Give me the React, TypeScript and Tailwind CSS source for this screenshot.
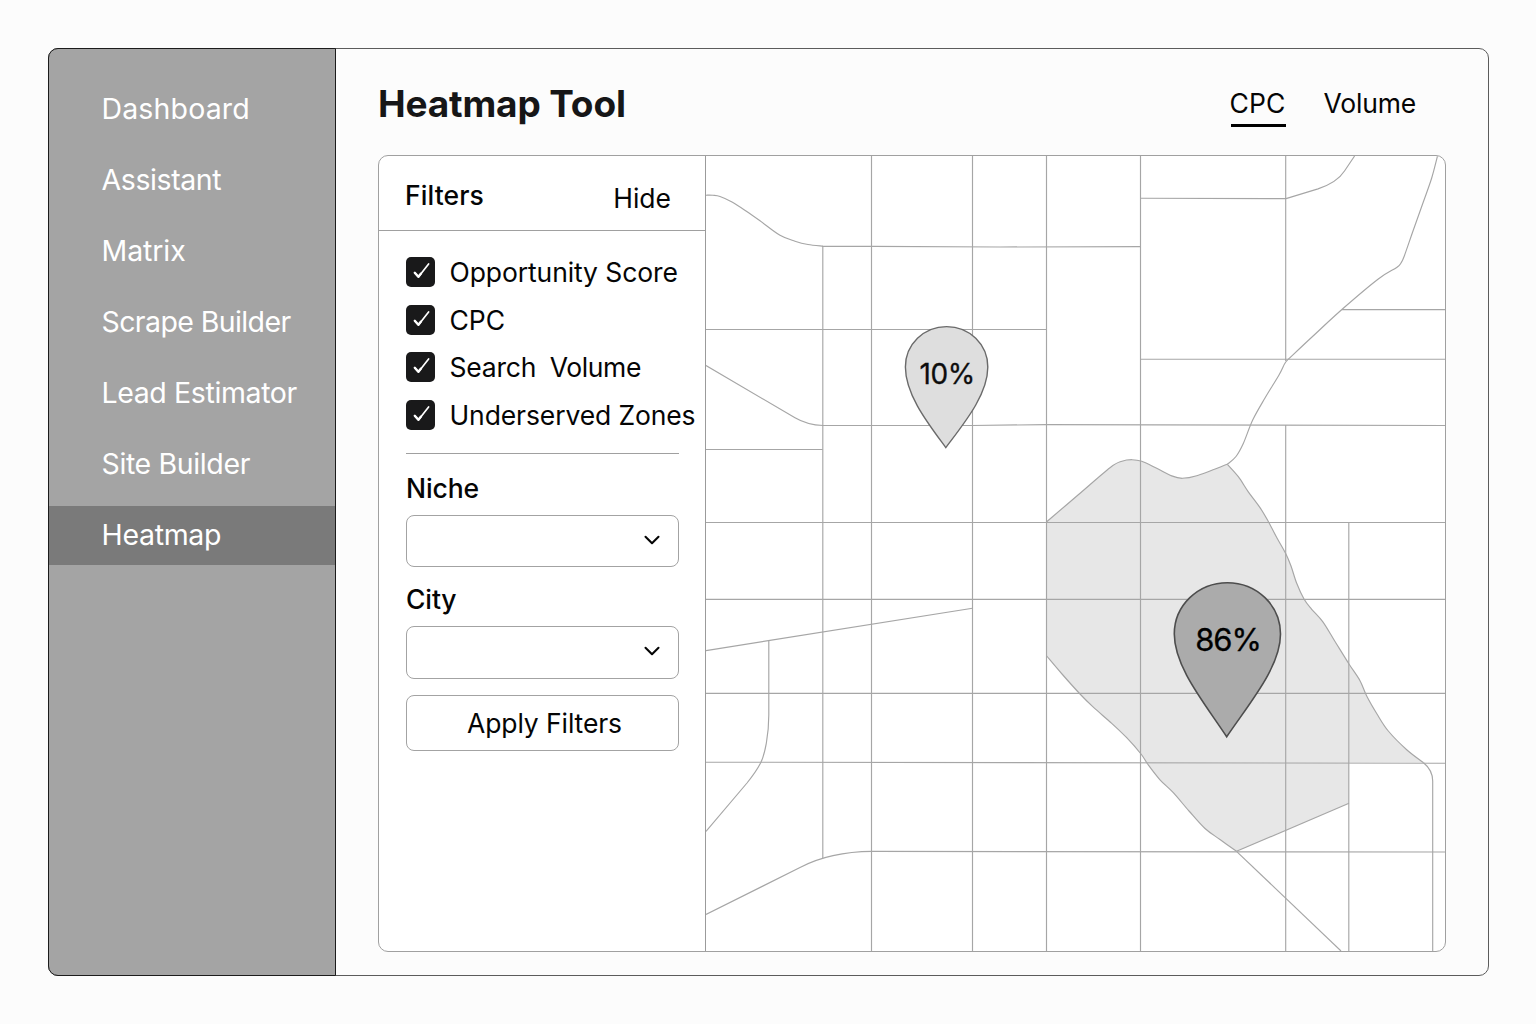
import type { ReactNode } from "react";
import { ChevronDown } from "lucide-react";

type Point = [number, number];

/** Smooth open curve through the given points (Catmull-Rom converted to Béziers). */
function curve(points: Point[], move = true): string {
  let d = move ? `M${points[0][0]} ${points[0][1]}` : "";
  for (let i = 0; i < points.length - 1; i++) {
    const p0 = points[Math.max(i - 1, 0)];
    const p1 = points[i];
    const p2 = points[i + 1];
    const p3 = points[Math.min(i + 2, points.length - 1)];
    const c1 = [p1[0] + (p2[0] - p0[0]) / 6, p1[1] + (p2[1] - p0[1]) / 6];
    const c2 = [p2[0] - (p3[0] - p1[0]) / 6, p2[1] - (p3[1] - p1[1]) / 6];
    d += ` C${c1[0]} ${c1[1]} ${c2[0]} ${c2[1]} ${p2[0]} ${p2[1]}`;
  }
  return d;
}

const navItems = [
  { label: "Dashboard", tracking: "tracking-[0.15px]" },
  { label: "Assistant", tracking: "tracking-[-0.4px]" },
  { label: "Matrix", tracking: "tracking-[-0.1px]" },
  { label: "Scrape Builder", tracking: "tracking-[-0.6px]" },
  { label: "Lead Estimator", tracking: "tracking-[-0.38px]" },
  { label: "Site Builder", tracking: "tracking-[-0.37px]" },
  { label: "Heatmap", tracking: "tracking-[-0.3px]", active: true },
];

const zoneTop: Point[] = [
  [1046.7, 521.7], [1078, 495], [1110, 467.7], [1122, 461.2], [1132, 459.7], [1141.7, 461.3],
  [1156.7, 468.3], [1171.7, 475.9], [1182.3, 478.3], [1196.7, 475.8], [1227.3, 464.3],
];
const zoneRight: Point[] = [
  [1227.3, 464.3], [1238.3, 476.7], [1248.3, 491.8], [1260, 507.6], [1268.3, 521.5], [1277, 538],
  [1285.7, 553.5], [1291, 566], [1296.7, 583.3], [1304, 599], [1311.7, 609.3], [1322.7, 621.7],
  [1334.7, 641], [1349, 664], [1360, 680.7], [1366.7, 696], [1377, 714], [1388.3, 731],
  [1406.7, 749.7], [1423.3, 762.5],
];
const zoneLeft: Point[] = [
  [1046.7, 656], [1062, 674], [1080, 694], [1093.3, 707.2], [1111.7, 723.3], [1126.7, 737.7],
  [1141, 754], [1148, 764.5], [1160, 779.8], [1173.3, 792.7], [1189, 811], [1205, 828.5],
  [1220, 839.5], [1236.5, 851.3],
];
const zoneFill = `${curve(zoneTop)} ${curve(zoneRight, false)} L1349 762.5 V803.3 L1236.5 851.3 ${curve(
  [...zoneLeft].reverse(),
  false,
)} Z`;

const streets = [
  // north-south
  "M871.5 156V951",
  "M972.5 156V951",
  "M1046.5 156V951",
  "M1140.5 156V951",
  "M1285.7 156V361",
  "M1285.7 425V951",
  "M1348.8 522V951",
  "M822.8 246V858",
  // east-west
  "M1140.5 198.2L1286 198.6",
  "M822 246.3H872L1000 247L1140.5 246.6",
  "M1342 309.6H1445",
  "M706 329.5H1046.5",
  "M1140.5 359.2H1445",
  "M822 425.5H972L1046 424.6L1445 425.5",
  "M706 449.5H822.8",
  "M706 522.5H1445",
  "M706 599.4H1445",
  "M706 693.4H1445",
  "M706 762.2L1445 763.2",
  "M872 851.4L1445 852",
  // diagonals and bends
  "M706 650.6L972.5 608.2",
  "M768.8 641V715C768.8 735 765 754 760.6 763C757 770 751 778 747 783L706 831.5",
  "M706 914.5L800 867.5C820 857 846 851.6 872 851.4",
  "M706 365.6L795 417.8C803 422.5 812 425.2 823 425.5",
  "M1286 198.6L1318 188.9C1331 184.5 1340 178 1344.5 171L1354.6 156",
  "M1236.5 851.3L1341 951",
  "M1349 803.3L1236.5 851.3",
  "M1423.3 762.5C1430 768 1432.7 773 1432.7 781V951",
];

const bends: Point[][] = [
  [[706, 195.2], [713, 195.3], [720, 196.5], [732, 202], [746, 211], [760, 220.8], [780, 235.3], [795, 241.2], [808, 244.5], [823, 246.2]],
  [[1437.5, 156], [1431.7, 178], [1423.3, 202], [1413, 231], [1404.3, 256], [1401, 263], [1396.7, 267.5], [1378.3, 279], [1343.3, 308.3], [1312, 337], [1288, 359.5]],
  [[1288, 359.5], [1284.5, 364], [1279, 375], [1265, 398], [1252.7, 420], [1243.3, 443.5], [1236, 456.5], [1227.3, 464.3]],
];

function MapView() {
  return (
    <svg
      className="block h-full w-full font-['Inter',sans-serif]"
      viewBox="706 156 739 795"
      preserveAspectRatio="none"
      role="img"
      aria-label="City heatmap"
    >
      <path d={zoneFill} fill="#e7e7e7" />
      <g fill="none" stroke="#a6a6a6" strokeWidth="1.15">
        {streets.map((d) => (
          <path key={d} d={d} />
        ))}
        {bends.map((points, i) => (
          <path key={i} d={curve(points)} />
        ))}
        <path d={curve(zoneTop)} />
        <path d={curve(zoneRight)} />
        <path d={curve(zoneLeft)} />
      </g>

      <path
        d="M945.8 447.6C928.5 424 905.4 395 905.4 367C905.4 344.4 923.8 326.6 946.6 326.6C969.4 326.6 987.8 344.4 987.8 367C987.8 395 963.5 424 945.8 447.6Z"
        fill="#dedede"
        stroke="#6a6a6a"
        strokeWidth="1.4"
      />
      <text x="919.4" y="384" fontSize="28" letterSpacing="-0.4" fill="#0d0d0d" stroke="#0d0d0d" strokeWidth="0.3">
        10%
      </text>

      <path
        d="M1226.7 736.8C1204.5 703 1174.3 667 1174.3 634C1174.3 605.6 1198 582.7 1227.4 582.7C1256.8 582.7 1280.5 605.6 1280.5 634C1280.5 667 1249.5 703 1226.7 736.8Z"
        fill="#ababab"
        stroke="#4d4d4d"
        strokeWidth="1.6"
      />
      <text x="1195.2" y="650.9" fontSize="31" letterSpacing="-1.1" fill="#000" stroke="#000" strokeWidth="0.3">
        86%
      </text>
    </svg>
  );
}

function CheckRow({ children }: { children: ReactNode }) {
  return (
    <label className="flex h-[30px] items-center gap-[14.5px] whitespace-nowrap">
      <span className="h-[30px] w-[29px] shrink-0 rounded-[5px] bg-[#19191a]">
        <svg className="block" width="29" height="30" viewBox="0 0 29 30" fill="none" stroke="#fff" strokeLinecap="round" strokeLinejoin="round">
          <path d="M8.6 15.8L12.4 20L22.6 7" strokeWidth="1.7" />
          <path d="M8.8 15.8L12.4 19.8L15 16.6" strokeWidth="2.3" />
        </svg>
      </span>
      <span className="pt-[2px]">{children}</span>
    </label>
  );
}

function SelectField({ label }: { label: string }) {
  return (
    <div>
      <div className="h-8 font-medium leading-8 tracking-[-0.1px]">{label}</div>
      <button
        aria-label={label}
        className="mt-[10.9px] flex h-[52.5px] w-full items-center justify-end rounded-lg border border-[#a3a3a3] pr-[13px]"
      >
        <ChevronDown className="mb-[2.6px] size-[26px]" strokeWidth={1.9} />
      </button>
    </div>
  );
}

export default function App() {
  return (
    <div className="h-[1024px] w-[1536px] bg-[#fcfcfc] pl-12 pt-12 font-['Inter',sans-serif] text-[26.5px] text-[#050505]">
      <div className="flex h-[928px] w-[1441px] rounded-[10px] border border-[#5c5c5c]">
        <aside className="-my-px -ml-px w-[288px] shrink-0 rounded-l-[10px] border border-[#1c1c1c] bg-[#a4a4a4]">
          <nav className="flex flex-col gap-3 pt-[31px] text-[28.5px] text-white">
            {navItems.map((item) => (
              <a
                key={item.label}
                className={`flex h-[59px] items-center whitespace-nowrap pl-[52.5px] ${item.tracking} ${
                  item.active ? "bg-[#7a7a7a]" : ""
                }`}
              >
                {item.label}
              </a>
            ))}
          </nav>
        </aside>

        <main className="flex min-w-0 flex-1 flex-col px-[42px] pb-[23px]">
          <header className="flex h-[106px] shrink-0 items-start justify-between pr-[30px] pt-[31px]">
            <h1 className="mt-px text-[37px] font-bold leading-[45px] tracking-[-0.15px] text-[#161617]">Heatmap Tool</h1>
            <div className="flex gap-[38px]">
              <span className="h-[47px] w-[55px] border-b-3 border-black leading-[46px]">
                <span className="-ml-px">CPC</span>
              </span>
              <span className="leading-[46px] tracking-[-0.2px]">Volume</span>
            </div>
          </header>

          <section className="flex min-h-0 flex-1 overflow-hidden rounded-[10px] border border-[#a0a0a0] bg-white">
            <div className="w-[327px] shrink-0 border-r border-[#9b9b9b]">
              <div className="flex h-[75px] items-start justify-between border-b border-[#a0a0a0] pl-[26px] pr-[34px] leading-8">
                <h2 className="mt-[23.3px] font-medium tracking-[0.1px]">Filters</h2>
                <button className="mt-[26px]">Hide</button>
              </div>
              <div className="w-[300px] pl-[27px] pt-[26px]">
                <div className="flex flex-col gap-[17.6px]">
                  <CheckRow>
                    <span className="tracking-[-0.1px]">Opportunity Score</span>
                  </CheckRow>
                  <CheckRow>CPC</CheckRow>
                  <CheckRow>
                    <span className="flex gap-[13.5px]">
                      <span className="tracking-[-0.2px]">Search</span>
                      <span className="tracking-[-0.4px]">Volume</span>
                    </span>
                  </CheckRow>
                  <CheckRow>
                    <span className="tracking-[-0.12px]">Underserved Zones</span>
                  </CheckRow>
                </div>
                <hr className="mt-[23.2px] border-[#a0a0a0]" />
                <div className="mt-[17.9px] flex flex-col gap-[15.9px]">
                  <SelectField label="Niche" />
                  <SelectField label="City" />
                </div>
                <button className="mt-[16.6px] flex h-[55.5px] w-full items-center justify-center rounded-lg border border-[#a3a3a3] pl-[4px] pt-px tracking-[-0.1px]">
                  Apply Filters
                </button>
              </div>
            </div>
            <div className="min-w-0 flex-1">
              <MapView />
            </div>
          </section>
        </main>
      </div>
    </div>
  );
}
